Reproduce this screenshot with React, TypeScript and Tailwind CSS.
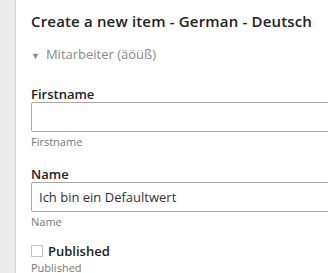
import React, { useState } from 'react';

const Field = ({ label, value, hint, className }: { label: string; value?: string; hint: string; className?: string }) => {
    const [text, setText] = useState(value || '');
    return (
        <div className={'flex flex-col ' + (className || '')}>
            <label className="text-[13px] font-semibold text-[#222] leading-[16px]">{label}</label>
            <input
                value={text}
                onChange={(e) => setText(e.target.value)}
                className="h-[30px] w-[310px] border border-[#a9a9a9] rounded-[2px] px-[7px] text-[13px] text-[#333] outline-none"
            />
            <span className="mt-[3px] text-[11px] text-[#777] leading-[14px]">{hint}</span>
        </div>
    );
};

const App = () => {
    const [published, setPublished] = useState(false);
    return (
        <div className="flex h-[273px] w-[328px] overflow-hidden bg-white" style={{ fontFamily: '"Open Sans", "Noto Sans", sans-serif' }}>
            <div className="w-[16px] shrink-0 bg-[#ebebeb] border-r border-[#d4d4d4]" />
            <div className="flex flex-col pl-[15px] pt-[11px]">
                <h1 className="text-[15px] font-semibold text-[#222] leading-[20px] tracking-[0.17px] whitespace-nowrap">
                    Create a new item - German - Deutsch
                </h1>
                <div className="mt-[15px] flex items-center gap-[6px] h-[18px] text-[13px] text-[#8a8a8a]">
                    <span className="text-[9px] leading-none">▼</span>
                    <span>Mitarbeiter (äöüß)</span>
                </div>
                <Field className="mt-[22px]" label="Firstname" hint="Firstname" />
                <Field className="mt-[17px]" label="Name" value="Ich bin ein Defaultwert" hint="Name" />
                <div className="mt-[14px] flex flex-col">
                    <label className="flex items-center gap-[5px] h-[16px] text-[13px] font-semibold text-[#222] leading-[16px]">
                        <input
                            type="checkbox"
                            checked={published}
                            onChange={(e) => setPublished(e.target.checked)}
                            className="h-[12px] w-[12px] appearance-none border border-[#c4c4c4] bg-white"
                        />
                        Published
                    </label>
                    <span className="mt-[2px] text-[11px] text-[#777] leading-[14px]">Published</span>
                </div>
            </div>
        </div>
    );
};

export default App;
